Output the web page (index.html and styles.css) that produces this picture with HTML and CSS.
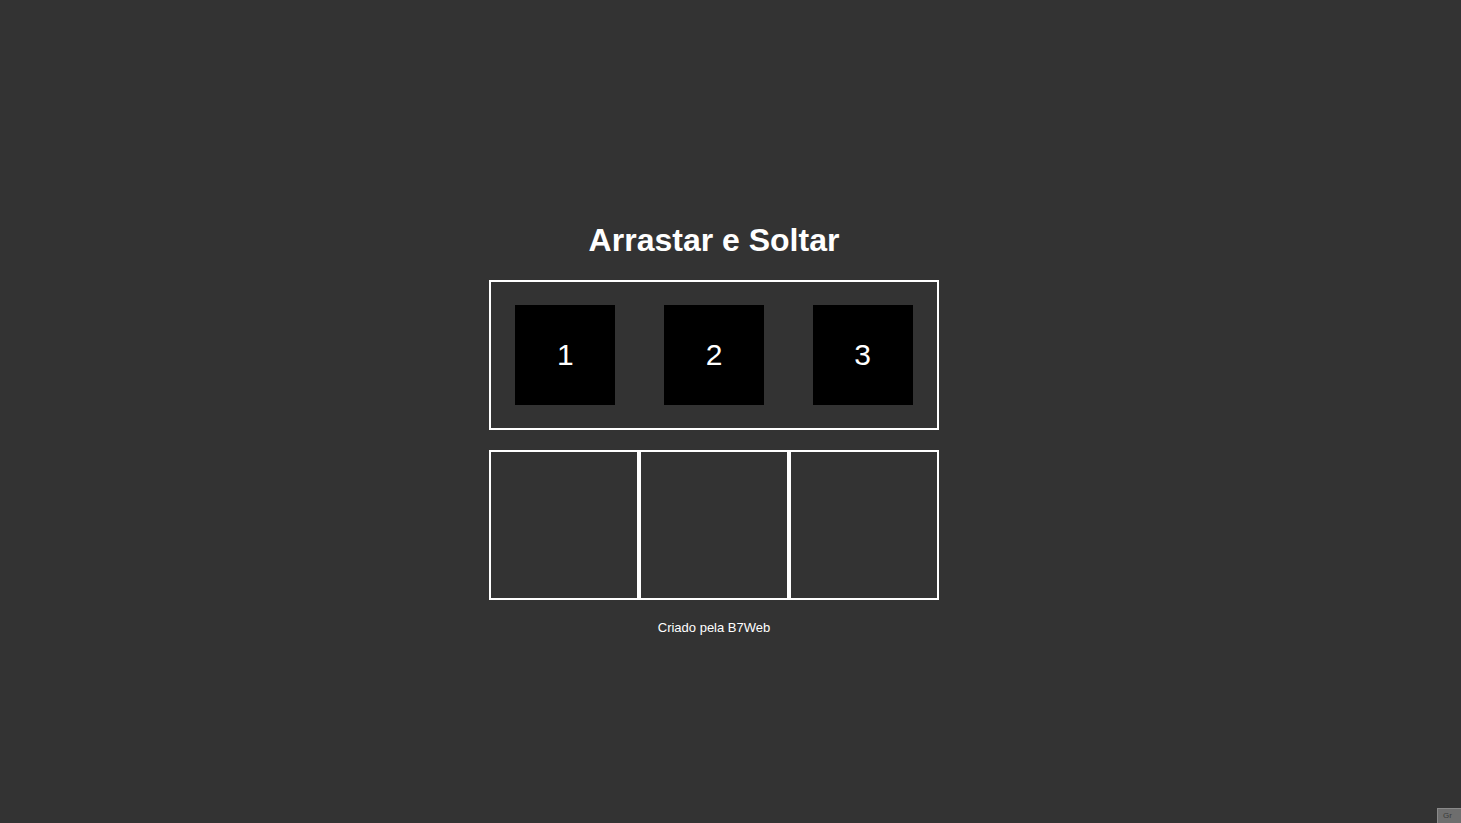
FILE: index.html
```html
<!DOCTYPE html>
<html lang="pt-BR">
<head>
<meta charset="utf-8">
<title>Arrastar e Soltar</title>
<link rel="stylesheet" href="styles.css">
</head>
<body>
<main class="container">
  <h1 class="title">Arrastar e Soltar</h1>
  <div class="neutral-area">
    <div class="item">1</div>
    <div class="item">2</div>
    <div class="item">3</div>
  </div>
  <div class="areas">
    <div class="area"></div>
    <div class="area"></div>
    <div class="area"></div>
  </div>
  <footer class="footer">Criado pela B7Web</footer>
</main>
<div class="corner-widget"><span>Gr</span></div>
</body>
</html>
```

FILE: styles.css
```css
html, body {
  margin: 0;
  padding: 0;
}

body {
  background-color: #333333;
  color: #ffffff;
  font-family: "Liberation Sans", Arial, sans-serif;
  min-height: 100vh;
  padding-right: 33px;
  box-sizing: border-box;
}

.container {
  width: 450px;
  margin: 0 auto;
  padding-top: 222px;
  display: flex;
  flex-direction: column;
}

.title {
  margin: 0 0 21px 0;
  font-size: 32px;
  line-height: 37px;
  font-weight: bold;
  text-align: center;
}

.neutral-area {
  box-sizing: border-box;
  height: 150px;
  border: 2px solid #ffffff;
  display: flex;
  justify-content: space-around;
  align-items: center;
}

.item {
  width: 100px;
  height: 100px;
  background-color: #000000;
  color: #ffffff;
  font-size: 30px;
  display: flex;
  justify-content: center;
  align-items: center;
}

.areas {
  margin-top: 20px;
  display: flex;
}

.area {
  box-sizing: border-box;
  width: 150px;
  height: 150px;
  border: 2px solid #ffffff;
}

.footer {
  margin-top: 20px;
  font-size: 13px;
  line-height: 15px;
  text-align: center;
}

.corner-widget {
  position: fixed;
  left: 1437px;
  top: 808px;
  width: 24px;
  height: 15px;
  box-sizing: border-box;
  background-color: #6e6e6e;
  border-top: 1px solid #8a8a8a;
  border-left: 1px solid #8a8a8a;
  overflow: hidden;
}

.corner-widget span {
  display: block;
  padding: 2px 0 0 5px;
  font-size: 8px;
  line-height: 10px;
  color: #3a3a3a;
}
```
